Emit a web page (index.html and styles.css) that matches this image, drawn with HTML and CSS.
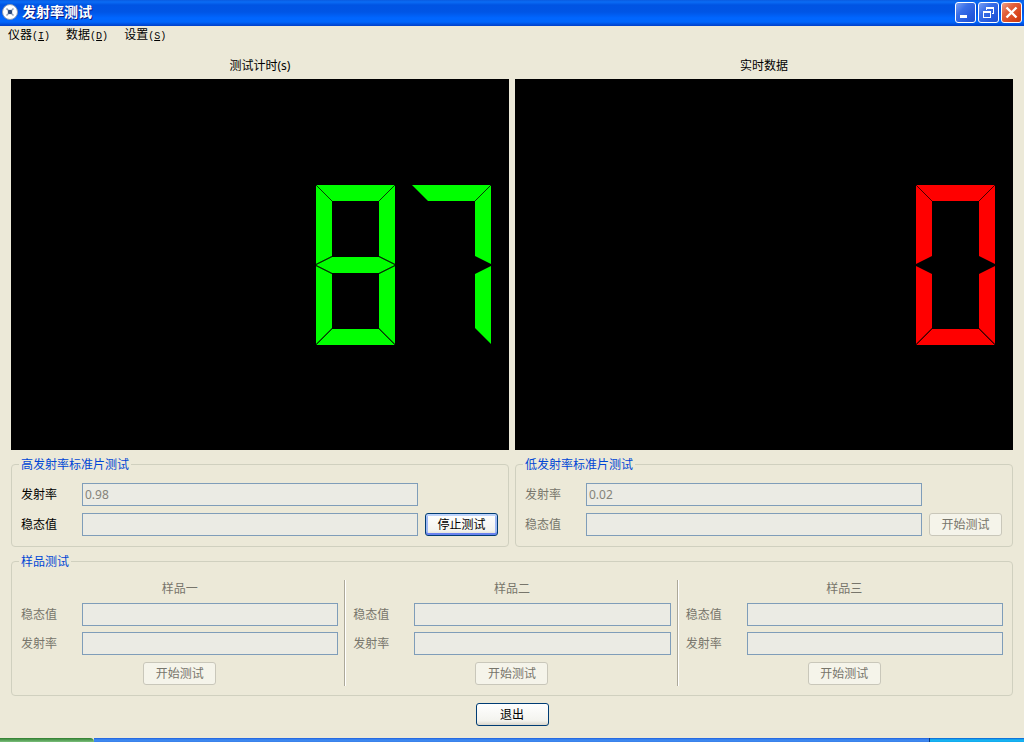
FILE: index.html
```html
<!DOCTYPE html>
<html lang="zh-CN">
<head>
<meta charset="utf-8">
<title>发射率测试</title>
<link rel="stylesheet" href="styles.css">
</head>
<body>
<svg class="defs" width="0" height="0" aria-hidden="true">
  <defs>
    <path id="seg-top" d="M0 0H79L63 16H16Z"/>
    <path id="seg-ul" d="M0 0L16 16V71L0 79Z"/>
    <path id="seg-ur" d="M79 0L63 16V71L79 79Z"/>
    <path id="seg-mid" d="M0 80L16 72H63L79 80L63 88H16Z"/>
    <path id="seg-ll" d="M0 81L16 89V143L0 159Z"/>
    <path id="seg-lr" d="M79 81L63 89V143L79 159Z"/>
    <path id="seg-bottom" d="M0 160L16 144H63L79 160Z"/>
  </defs>
</svg>

<header class="titlebar">
  <svg class="app-icon" width="16" height="16" viewBox="0 0 16 16" aria-hidden="true">
    <circle cx="8" cy="8" r="7.500" fill="#fff" stroke="#8c9cb4"/>
    <path d="M4.500 4.500l7 7M11.500 4.500l-7 7" stroke="#8fa0ba" stroke-width="1.500"/>
    <circle cx="8" cy="8" r="2.300" fill="#2d4a78"/>
  </svg>
  <h1 class="title">发射率测试</h1>
  <div class="window-controls">
    <button class="win-btn" type="button" aria-label="最小化"><svg width="19" height="19" viewBox="0 0 19 19"><path d="M4 12h7v3H4z" fill="#fff"/></svg></button>
    <button class="win-btn" type="button" aria-label="还原"><svg width="19" height="19" viewBox="0 0 19 19"><path d="M7 4h8v7h-2v-1h1V6H8v1H7z" fill="#fff"/><path fill-rule="evenodd" d="M4 8h8v7H4zM5 10v4h6v-4z" fill="#fff"/></svg></button>
    <button class="win-btn win-btn-close" type="button" aria-label="关闭"><svg width="19" height="19" viewBox="0 0 19 19"><path d="M4.500 4.500l10 10M14.500 4.500l-10 10" stroke="#fff" stroke-width="2.400"/></svg></button>
  </div>
</header>

<nav class="menubar">
  <button class="menu" type="button">仪器<span class="key">(<u>I</u>)</span></button>
  <button class="menu" type="button">数据<span class="key">(<u>D</u>)</span></button>
  <button class="menu" type="button">设置<span class="key">(<u>S</u>)</span></button>
</nav>

<main class="content">
  <div class="columns displays">
    <section class="display">
      <h2 class="caption">测试计时(s)</h2>
      <div class="lcd lcd-green" role="img" aria-label="87">
        <svg width="79" height="160" viewBox="0 0 79 160">
          <use href="#seg-top"/><use href="#seg-ul"/><use href="#seg-ur"/><use href="#seg-mid"/><use href="#seg-ll"/><use href="#seg-lr"/><use href="#seg-bottom"/>
          <path class="seam" d="M0 0L16 16M79 0L63 16M0 79.500L16 71.500M0 80.500L16 88.500M79 79.500L63 71.500M79 80.500L63 88.500M0 160L16 144M79 160L63 144"/>
        </svg>
        <svg width="79" height="160" viewBox="0 0 79 160">
          <use href="#seg-top"/><use href="#seg-ur"/><use href="#seg-lr"/>
          <path class="seam" d="M79 0L63 16"/>
        </svg>
      </div>
    </section>
    <section class="display">
      <h2 class="caption">实时数据</h2>
      <div class="lcd lcd-red" role="img" aria-label="0">
        <svg width="79" height="160" viewBox="0 0 79 160">
          <use href="#seg-top"/><use href="#seg-ul"/><use href="#seg-ur"/><use href="#seg-ll"/><use href="#seg-lr"/><use href="#seg-bottom"/>
          <path class="seam" d="M0 0L16 16M79 0L63 16M0 160L16 144M79 160L63 144"/>
        </svg>
      </div>
    </section>
  </div>

  <div class="columns">
    <fieldset class="group">
      <legend>高发射率标准片测试</legend>
      <div class="standard">
        <label for="high-e">发射率</label>
        <input class="field" id="high-e" type="text" value="0.98" disabled>
        <label class="row-start" for="high-v">稳态值</label>
        <input class="field" id="high-v" type="text" disabled>
        <button class="btn btn-focus" type="button">停止测试</button>
      </div>
    </fieldset>
    <fieldset class="group" disabled>
      <legend>低发射率标准片测试</legend>
      <div class="standard">
        <label for="low-e">发射率</label>
        <input class="field" id="low-e" type="text" value="0.02">
        <label class="row-start" for="low-v">稳态值</label>
        <input class="field" id="low-v" type="text">
        <button class="btn" type="button">开始测试</button>
      </div>
    </fieldset>
  </div>

  <fieldset class="group group-samples" disabled>
    <legend>样品测试</legend>
    <div class="samples">
      <section class="sample">
        <h3 class="sample-title">样品一</h3>
        <label for="s1-v">稳态值</label>
        <input class="field" id="s1-v" type="text">
        <label for="s1-e">发射率</label>
        <input class="field" id="s1-e" type="text">
        <div class="sample-action"><button class="btn" type="button">开始测试</button></div>
      </section>
      <div class="separator"></div>
      <section class="sample">
        <h3 class="sample-title">样品二</h3>
        <label for="s2-v">稳态值</label>
        <input class="field" id="s2-v" type="text">
        <label for="s2-e">发射率</label>
        <input class="field" id="s2-e" type="text">
        <div class="sample-action"><button class="btn" type="button">开始测试</button></div>
      </section>
      <div class="separator"></div>
      <section class="sample">
        <h3 class="sample-title">样品三</h3>
        <label for="s3-v">稳态值</label>
        <input class="field" id="s3-v" type="text">
        <label for="s3-e">发射率</label>
        <input class="field" id="s3-e" type="text">
        <div class="sample-action"><button class="btn" type="button">开始测试</button></div>
      </section>
    </div>
  </fieldset>

  <div class="actions"><button class="btn" type="button">退出</button></div>
</main>

<footer class="taskbar">
  <div class="start"></div>
  <div class="tasks"></div>
  <div class="tray"></div>
</footer>
</body>
</html>
```
FILE: styles.css
```css
* {
  box-sizing: border-box;
}

body {
  margin: 0;
  min-height: 100vh;
  display: flex;
  flex-direction: column;
  background: #ece9d8;
  color: #000;
  font: 12px/16px "Noto Sans", "Noto Sans CJK SC", sans-serif;
}

button,
input {
  font: inherit;
  color: inherit;
}

h1,
h2,
h3 {
  margin: 0;
  font: inherit;
}

.defs {
  position: absolute;
}

/* Title bar */
.titlebar {
  display: flex;
  align-items: center;
  gap: 4px;
  height: 26px;
  padding: 0 2px 2px;
  background: linear-gradient(#0a5be0 0, #0a6cf5 2px, #0054e3 5px, #0055e5 12px, #0066ff 18px, #0066fc 22px, #003fc8 26px);
}

.title {
  flex: 1;
  color: #fff;
  font-size: 14px;
  font-weight: 700;
  text-shadow: 1px 1px 0 #0a1883;
}

.window-controls {
  display: flex;
  gap: 2px;
}

.win-btn {
  width: 21px;
  height: 21px;
  padding: 0;
  border: 1px solid #fff;
  border-radius: 3px;
  background: linear-gradient(135deg, #7ba0f4 0, #3a6fe8 35%, #2458dc 75%, #1f50d0 100%);
}

.win-btn svg {
  display: block;
}

.win-btn-close {
  background: linear-gradient(135deg, #f0a088 0, #e2603c 35%, #d8431a 75%, #c23a12 100%);
}

/* Menu bar */
.menubar {
  display: flex;
  gap: 16px;
  padding: 1px 8px;
}

.menu {
  padding: 0;
  border: 0;
  background: none;
}

.key {
  font-family: "Liberation Mono", monospace;
  font-size: 10px;
}

/* Main area */
.content {
  flex: 1;
  display: flex;
  flex-direction: column;
  gap: 7px;
  padding: 12px 11px;
}

.columns {
  display: grid;
  grid-template-columns: 1fr 1fr;
  gap: 6px;
}

.displays {
  flex: 1;
}

.display {
  display: flex;
  flex-direction: column;
  gap: 5px;
}

.caption {
  text-align: center;
}

.lcd {
  flex: 1;
  display: flex;
  justify-content: flex-end;
  align-items: center;
  gap: 17px;
  padding: 0 18px;
  background: #000;
}

.lcd-green {
  fill: #0f0;
  stroke: #063806;
}

.lcd-red {
  fill: #f00;
  stroke: #400;
}

.lcd use {
  stroke: none;
}

.seam {
  fill: none;
}

/* Group boxes */
.group {
  min-width: 0;
  margin: 0;
  padding: 11px 10px 10px 9px;
  border: 1px solid #d0d0bf;
  border-radius: 4px;
}

.group-samples {
  padding: 11px 9px 9px;
}

.group legend {
  padding: 0 2px;
  margin-left: -2px;
  line-height: 15px;
  color: #0046d5;
}

.group:disabled label,
.group:disabled .sample-title {
  color: #77756b;
}

.standard {
  display: grid;
  grid-template-columns: 54px 1fr 73px;
  gap: 7px;
  align-items: center;
}

.row-start {
  grid-column: 1;
}

.field {
  width: 100%;
  min-width: 0;
  height: 23px;
  padding: 0 2px;
  border: 1px solid #7f9db9;
  border-radius: 0;
  background: #ebebe4;
}

.field:disabled {
  color: #85837a;
}

.btn {
  width: 73px;
  height: 23px;
  padding: 0;
  border: 1px solid #003c74;
  border-radius: 3px;
  background: linear-gradient(#fff, #f3f3ee 80%, #dad6cc);
}

.btn-focus {
  box-shadow: inset 0 2px 0 #bdd3fb, inset 0 -2px 0 #6982ee, inset 2px 0 0 #9fb9f4, inset -2px 0 0 #9fb9f4;
}

.btn:disabled {
  border-color: #c9c7ba;
  background: #f5f4ea;
  color: #77756b;
}

/* Samples */
.samples {
  display: flex;
}

.sample {
  flex: 1;
  min-width: 0;
  display: grid;
  grid-template-columns: 54px 1fr;
  gap: 6px 7px;
  align-items: center;
}

.sample-title {
  grid-column: 1 / -1;
  line-height: 17px;
  text-align: center;
}

.sample-action {
  grid-column: 1 / -1;
  display: flex;
  justify-content: center;
  padding: 1px 0;
}

.separator {
  width: 2px;
  margin: 0 7px 0 6px;
  border-left: 1px solid #aca899;
  border-right: 1px solid #fff;
}

.actions {
  display: flex;
  justify-content: center;
}

/* Taskbar edge */
.taskbar {
  display: flex;
  height: 4px;
}

.start {
  width: 94px;
  border-radius: 0 4px 0 0;
  background: linear-gradient(#2f7d2f, #7cc07c);
}

.tasks {
  flex: 1;
  background: linear-gradient(#1f5fdc 0, #3f8cf3 2px, #3a80e8);
}

.tray {
  width: 95px;
  border-left: 1px solid #0a3a80;
  background: linear-gradient(#0d5fd0 0, #18b8f4 2px, #12a8ec);
}
```
